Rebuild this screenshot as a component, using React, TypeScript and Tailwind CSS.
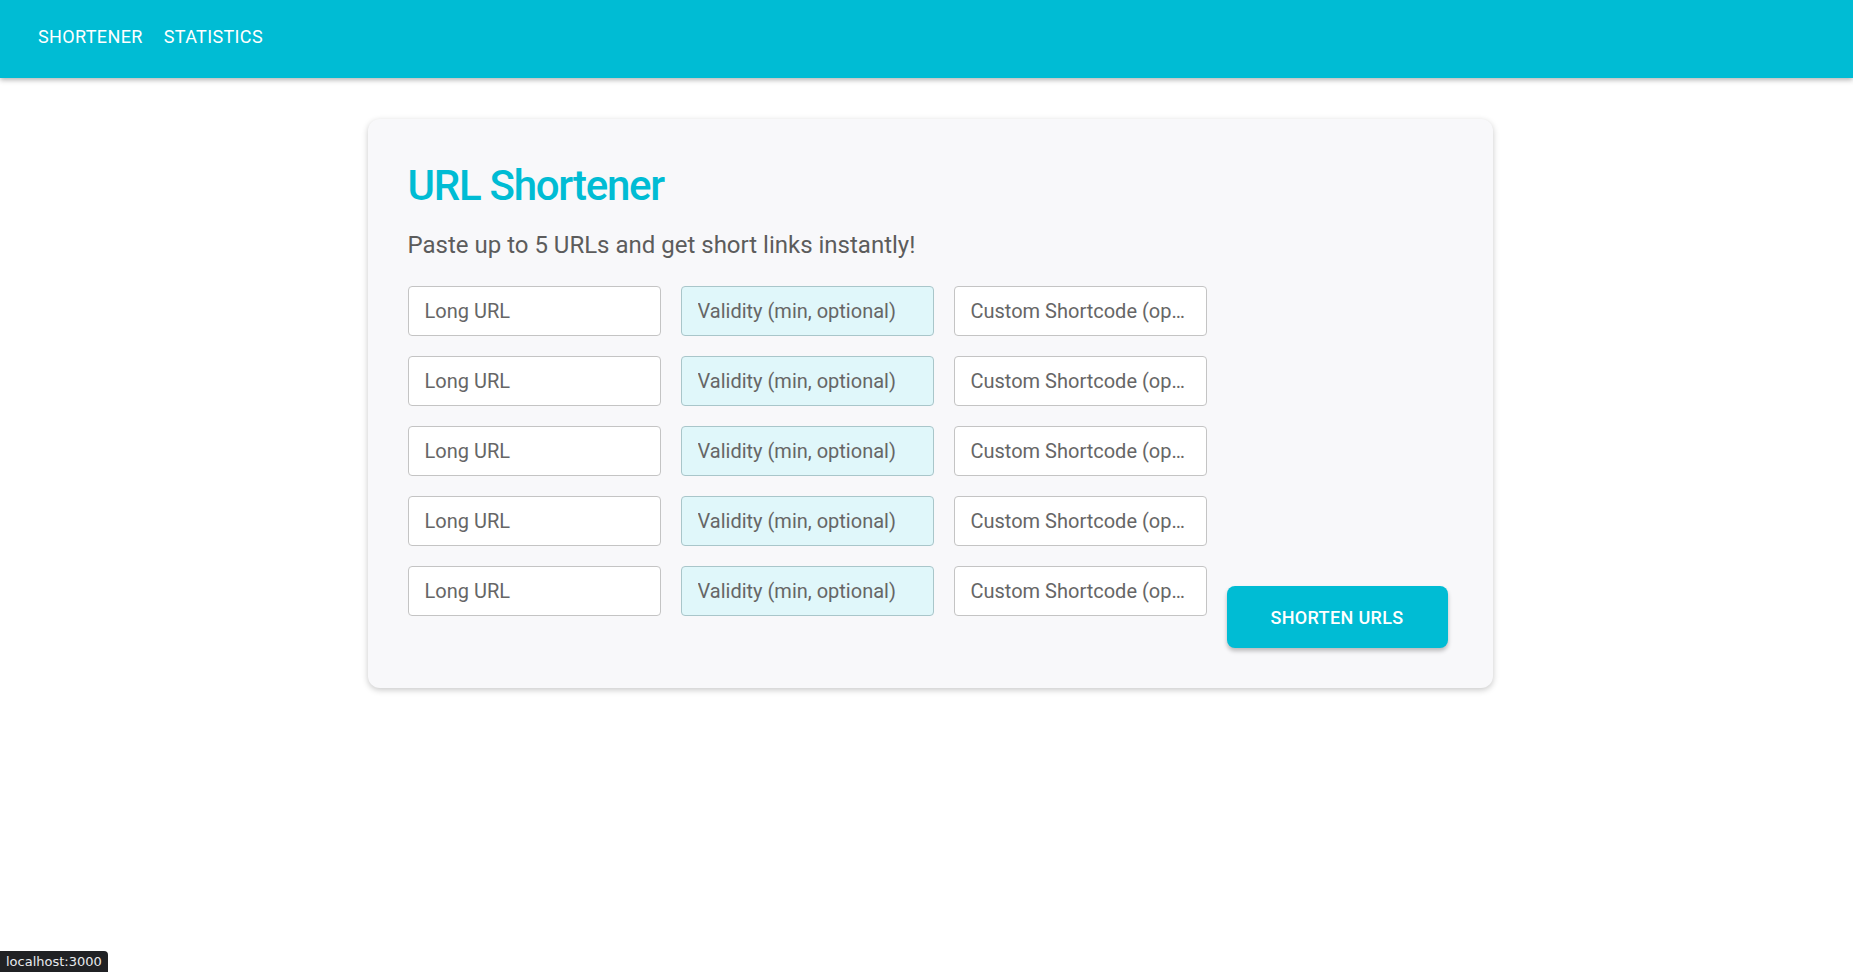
import React from "react";

const rows = [0, 1, 2, 3, 4];

const Field = ({ placeholder, tinted }: { placeholder: string; tinted?: boolean }) => (
    <input
        type="text"
        placeholder={placeholder}
        className={`w-[253px] h-[50px] px-4 rounded-[4px] border text-[20px] text-[#666] placeholder:text-[#666] outline-none text-ellipsis ${
            tinted ? "bg-[#e0f7fa] border-[#a9c6ca]" : "bg-white border-[#c4c4c4]"
        }`}
    />
);

export default function App() {
    return (
        <div className="min-h-screen bg-white font-['Roboto',sans-serif]">
            {/* Top bar */}
            <header className="h-[78px] bg-[#00bcd4] flex items-center pb-[5px] px-[38px] gap-[21px] shadow-[0_2px_5px_rgba(0,0,0,0.3)] relative">
                <button className="text-white text-[18px] tracking-[0.02em] uppercase">Shortener</button>
                <button className="text-white text-[18px] tracking-[0.02em] uppercase">Statistics</button>
            </header>

            <main className="pt-[41px] flex justify-center">
                <div className="w-[1125px] ml-[7px] rounded-[12px] bg-[#f8f8fa] shadow-[0_2px_6px_rgba(0,0,0,0.22)] p-10">
                    <h1 className="text-[42px] leading-[53px] font-medium tracking-[-0.03em] text-[#00bcd4]">URL Shortener</h1>
                    <p className="mt-[15px] text-[24px] leading-[36px] text-[#5c5c5c]">
                        Paste up to 5 URLs and get short links instantly!
                    </p>

                    <div className="mt-[23px] flex items-end gap-5">
                        <div className="flex flex-col gap-5 pb-8">
                            {rows.map((i) => (
                                <div key={i} className="flex gap-5">
                                    <Field placeholder="Long URL" />
                                    <Field placeholder="Validity (min, optional)" tinted />
                                    <Field placeholder="Custom Shortcode (optional)" />
                                </div>
                            ))}
                        </div>
                        <button className="w-[221px] h-[62px] rounded-[8px] bg-[#00bcd4] text-white text-[18px] font-medium tracking-[0.02em] uppercase shadow-[0_3px_4px_rgba(0,0,0,0.25)]">
                            Shorten URLs
                        </button>
                    </div>
                </div>
            </main>

            {/* browser status bubble */}
            <div className="fixed bottom-0 left-0 h-[21px] px-[6px] bg-[#202124] text-[#e8eaed] text-[13px] leading-[21px] rounded-tr-[4px] font-['DejaVu_Sans',sans-serif]">
                localhost:3000
            </div>
        </div>
    );
}
